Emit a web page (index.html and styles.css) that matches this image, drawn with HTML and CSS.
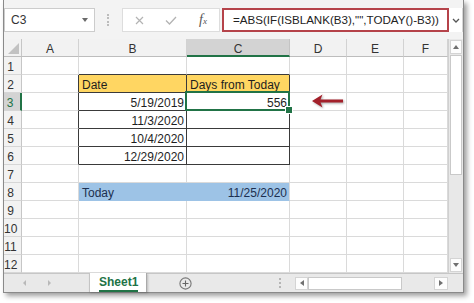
FILE: index.html
```html
<!DOCTYPE html>
<html>
<head>
<meta charset="utf-8">
<link rel="stylesheet" href="styles.css">
</head>
<body>
<div class="window">
  <div class="fbar">
    <div class="namebox"><span>C3</span><span class="dd"></span></div>
    <div class="sep"></div>
    <div class="btns">
      <svg class="ico-x" width="9" height="9" viewBox="0 0 9 9"><path d="M1 1L8 8M8 1L1 8" stroke="#b3b3b3" stroke-width="1.2" fill="none"/></svg>
      <svg class="ico-ok" width="12" height="9" viewBox="0 0 12 9"><path d="M1 4.5L4.5 8L11 1" stroke="#b3b3b3" stroke-width="1.3" fill="none"/></svg>
      <span class="fx">f<span class="fxs">x</span></span>
    </div>
    <div class="ffield">
      <div class="formula">=ABS(IF(ISBLANK(B3),"",TODAY()-B3))</div>
      <div class="chev"><svg width="8" height="5" viewBox="0 0 8 5"><path d="M1 1L4 4L7 1" stroke="#555" stroke-width="1.3" fill="none"/></svg></div>
    </div>
  </div>

  <div class="main">
    <div class="grid">
      <div class="corner"><span class="tri"></span></div>
      <div class="h">A</div><div class="h">B</div><div class="h hsel">C</div><div class="h">D</div><div class="h">E</div><div class="h">F</div>

      <div class="rh">1</div><div class="c"></div><div class="c tbb"></div><div class="c tbb"></div><div class="c"></div><div class="c"></div><div class="c"></div>

      <div class="rh">2</div><div class="c tbr"></div><div class="c tb yl">Date</div><div class="c tb yl">Days from Today</div><div class="c"></div><div class="c"></div><div class="c"></div>

      <div class="rh rsel">3</div><div class="c tbr"></div><div class="c tb r">5/19/2019</div><div class="c tb r active">556</div><div class="c"></div><div class="c"></div><div class="c"></div>

      <div class="rh">4</div><div class="c tbr"></div><div class="c tb r">11/3/2020</div><div class="c tb"></div><div class="c"></div><div class="c"></div><div class="c"></div>

      <div class="rh">5</div><div class="c tbr"></div><div class="c tb r">10/4/2020</div><div class="c tb"></div><div class="c"></div><div class="c"></div><div class="c"></div>

      <div class="rh">6</div><div class="c tbr"></div><div class="c tb r">12/29/2020</div><div class="c tb"></div><div class="c"></div><div class="c"></div><div class="c"></div>

      <div class="rh">7</div><div class="c"></div><div class="c"></div><div class="c"></div><div class="c"></div><div class="c"></div><div class="c"></div>

      <div class="rh">8</div><div class="c"></div><div class="c bl bl-l">Today</div><div class="c bl r">11/25/2020</div><div class="c"></div><div class="c"></div><div class="c"></div>

      <div class="rh">9</div><div class="c"></div><div class="c"></div><div class="c"></div><div class="c"></div><div class="c"></div><div class="c"></div>

      <div class="rh">10</div><div class="c"></div><div class="c"></div><div class="c"></div><div class="c"></div><div class="c"></div><div class="c"></div>

      <div class="rh">11</div><div class="c"></div><div class="c"></div><div class="c"></div><div class="c"></div><div class="c"></div><div class="c"></div>

      <div class="rh">12</div><div class="c"></div><div class="c"></div><div class="c"></div><div class="c"></div><div class="c"></div><div class="c"></div>
    </div>
    <div class="vscroll">
      <div class="vbtn"><span class="up"></span></div>
      <div class="vthumb"></div>
      <div class="vtrack"></div>
      <div class="vbtn"><span class="down"></span></div>
    </div>
    <svg class="callout" width="34" height="16" viewBox="0 0 34 16">
      <path d="M1 8L11.5 1.5L9.5 6.4H32V9.6H9.5L11.5 14.5Z" fill="#a3202a"/>
    </svg>
  </div>

  <div class="tabbar">
    <div class="nav"><span class="nl"></span><span class="nr"></span></div>
    <div class="tab"><span class="tabtext">Sheet1</span></div>
    <div class="plus"><svg width="13" height="13" viewBox="0 0 13 13"><circle cx="6.5" cy="6.5" r="5.6" stroke="#777" stroke-width="1.1" fill="none"/><path d="M6.5 3.5V9.5M3.5 6.5H9.5" stroke="#666" stroke-width="1.1"/></svg></div>
    <div class="split"></div>
    <div class="hscroll">
      <div class="hbtn"><span class="hl"></span></div>
      <div class="hthumb"></div>
      <div class="htrack"></div>
      <div class="hbtn hbtn-r"><span class="hr"></span></div>
    </div>
    <div class="hcorner"></div>
  </div>
</div>
</body>
</html>
```

FILE: styles.css
```css
* { box-sizing: border-box; margin: 0; padding: 0; }

body {
  margin: 0;
  background: #ffffff;
  font-family: "Liberation Sans", Arial, sans-serif;
  width: 474px;
  height: 303px;
  overflow: hidden;
}

.window {
  margin-left: 3px;
  width: 461px;
  height: 293px;
  border: 1px solid #8a8a8a;
  border-top: none;
  box-shadow: 3px 3px 5px rgba(0, 0, 0, 0.38);
  display: flex;
  flex-direction: column;
  position: relative;
  background: #fff;
}

/* formula bar */
.fbar {
  height: 39px;
  flex: 0 0 39px;
  background: #f3f3f3;
  display: flex;
  align-items: flex-start;
  padding-top: 8px;
}

.namebox {
  width: 91px;
  height: 24px;
  background: #fff;
  border: 1px solid #cccccc;
  display: flex;
  align-items: center;
  justify-content: space-between;
  padding: 0 6px 0 6px;
  font-size: 12px;
  color: #333;
}

.dd {
  width: 0;
  height: 0;
  border-left: 3.5px solid transparent;
  border-right: 3.5px solid transparent;
  border-top: 4px solid #6a6a6a;
}

.sep {
  width: 2px;
  height: 12px;
  margin: 6px 0 0 12px;
  border-left: 2px dotted #bcbcbc;
}

.btns {
  margin-left: 13px;
  width: 98px;
  height: 24px;
  background: #fff;
  border: 1px solid #dddddd;
  display: flex;
  align-items: center;
  padding-left: 12px;
  gap: 21px;
}

.fx {
  font-family: "Liberation Serif", "Times New Roman", serif;
  font-style: italic;
  font-size: 14px;
  color: #555;
  margin-left: 1px;
}

.fxs {
  font-size: 9px;
}

.ffield {
  margin-left: 2px;
  flex: 1;
  height: 24px;
  display: flex;
  background: #fff;
  border-right: 1px solid #d6d6d6;
}

.formula {
  width: 227px;
  height: 24px;
  border: 2px solid #b5434a;
  font-size: 11.6px;
  line-height: 20px;
  padding-left: 9px;
  color: #222;
  white-space: nowrap;
}

.chev {
  flex: 1;
  display: flex;
  align-items: center;
  justify-content: center;
  padding-left: 1px;
}

/* sheet */
.main {
  height: 234px;
  flex: 0 0 234px;
  display: flex;
  position: relative;
}

.grid {
  width: 444px;
  display: grid;
  grid-template-columns: 18px 57px 108px 103px 57px 57px 44px;
  grid-auto-rows: 18px;
  font-size: 12px;
}

.corner {
  background: #f2f2f2;
  border-right: 1px solid #c6c6c6;
  border-bottom: 1px solid #bdbdbd;
  position: relative;
}

.tri {
  position: absolute;
  right: 2px;
  bottom: 2px;
  width: 0;
  height: 0;
  border-left: 11px solid transparent;
  border-bottom: 11px solid #c2c2c2;
}

.h {
  background: #f2f2f2;
  border-right: 1px solid #d2d2d2;
  border-bottom: 1px solid #bdbdbd;
  text-align: center;
  line-height: 16px;
  padding-top: 2px;
  color: #333;
}

.hsel {
  background: #d3d3d3;
  border-bottom: 2px solid #217346;
  border-right-color: #c4c4c4;
}

.rh {
  background: #f2f2f2;
  border-right: 1px solid #c6c6c6;
  border-bottom: 1px solid #d6d6d6;
  line-height: 16px;
  padding: 2px 4px 0 0;
  text-align: center;
  color: #333;
}

.rsel {
  background: #d3d3d3;
  border-right: 2px solid #217346;
  color: #217346;
}

.c {
  border-right: 1px solid #dadada;
  border-bottom: 1px solid #dadada;
  line-height: 16px;
  padding: 2px 3px 0 3px;
  white-space: nowrap;
  overflow: visible;
  color: #1e1e1e;
}

.r { text-align: right; padding-right: 2px; }

.tb { border-right-color: #3a3a3a; border-bottom-color: #3a3a3a; }
.tbr { border-right-color: #3a3a3a; }
.tbb { border-bottom-color: #3a3a3a; }

.yl { background: #ffd662; }

.bl {
  background: #9dc3e6;
  border-bottom-color: #9dc3e6;
  color: #1c2f4f;
}

.bl-l { border-right-color: #9dc3e6; }

.active {
  position: relative;
  z-index: 2;
}

.active::after {
  content: "";
  position: absolute;
  left: -2px;
  top: -2px;
  right: -1px;
  bottom: -1px;
  border: 2px solid #217346;
}

.active::before {
  content: "";
  position: absolute;
  right: -4px;
  bottom: -4px;
  width: 6px;
  height: 6px;
  background: #217346;
  border: 1px solid #fff;
  z-index: 3;
}

.vscroll {
  width: 15px;
  background: #e8e8e8;
  border-left: 1px solid #d0d0d0;
  display: flex;
  flex-direction: column;
  align-items: center;
  padding: 1px 0;
}

.vbtn {
  width: 12px;
  height: 14px;
  background: #fdfdfd;
  border: 1px solid #d4d4d4;
  display: flex;
  align-items: center;
  justify-content: center;
}

.up {
  border-left: 3px solid transparent;
  border-right: 3px solid transparent;
  border-bottom: 4px solid #707070;
}

.down {
  border-left: 3px solid transparent;
  border-right: 3px solid transparent;
  border-top: 4px solid #707070;
}

.vthumb {
  width: 12px;
  height: 120px;
  margin-top: 1px;
  background: #ffffff;
  border: 1px solid #c9c9c9;
}

.vtrack { flex: 1; }

.callout {
  position: absolute;
  left: 307px;
  top: 54px;
  filter: drop-shadow(1px 1px 1px rgba(0, 0, 0, 0.35));
}

/* tab bar */
.tabbar {
  height: 19px;
  flex: 0 0 19px;
  background: #e9e9e9;
  border-top: 1px solid #c6c6c6;
  display: flex;
  align-items: stretch;
}

.nav {
  width: 85px;
  display: flex;
  align-items: center;
  padding-left: 19px;
  gap: 22px;
}

.nl {
  border-top: 3px solid transparent;
  border-bottom: 3px solid transparent;
  border-right: 3px solid #b9b9b9;
}

.nr {
  border-top: 3px solid transparent;
  border-bottom: 3px solid transparent;
  border-left: 3px solid #b9b9b9;
}

.tab {
  width: 58px;
  margin-top: -1px;
  background: #ffffff;
  border-left: 1px solid #c4c4c4;
  border-right: 1px solid #aaaaaa;
  box-shadow: 1px 1px 2px rgba(0, 0, 0, 0.2);
  display: flex;
  align-items: flex-end;
  padding-left: 9px;
}

.tabtext {
  font-size: 12px;
  font-weight: bold;
  color: #217346;
  line-height: 15px;
  border-bottom: 2px solid #217346;
  padding-bottom: 0;
}

.plus {
  margin-left: 32px;
  display: flex;
  align-items: center;
}

.split {
  margin-left: 87px;
  width: 2px;
  margin-top: 4px;
  height: 10px;
  border-left: 2px dotted #b5b5b5;
}

.hscroll {
  margin-left: 14px;
  width: 153px;
  display: flex;
  align-items: center;
}

.hbtn {
  width: 13px;
  height: 13px;
  background: #fdfdfd;
  border: 1px solid #d4d4d4;
  display: flex;
  align-items: center;
  justify-content: center;
}

.hbtn-r { width: 14px; }

.hl {
  border-top: 3px solid transparent;
  border-bottom: 3px solid transparent;
  border-right: 4px solid #707070;
}

.hr {
  border-top: 3px solid transparent;
  border-bottom: 3px solid transparent;
  border-left: 4px solid #707070;
}

.hthumb {
  width: 94px;
  height: 13px;
  background: #fff;
  border: 1px solid #c9c9c9;
}

.htrack { flex: 1; }

.hcorner {
  flex: 1;
  background: #e9e9e9;
}
```
